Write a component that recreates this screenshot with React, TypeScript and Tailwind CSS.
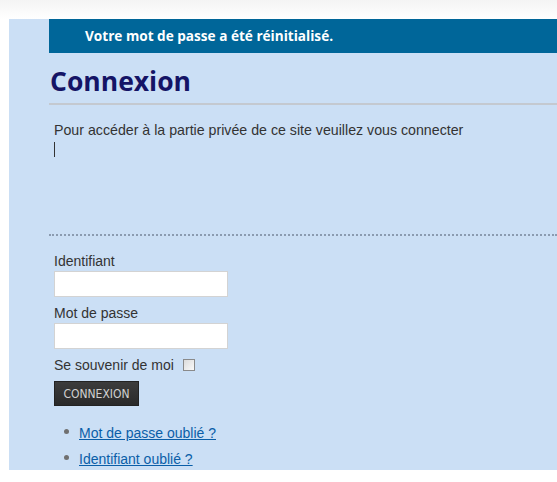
import React from "react";

export default function App() {
  return (
    <div className="w-[557px] h-[482px] bg-white overflow-hidden" style={{ fontFamily: '"Liberation Sans", Arial, sans-serif' }}>
      <div className="h-[19px] bg-gradient-to-b from-[#f4f4f4] to-white" />
      <div className="ml-[9px] h-[451px] bg-[#cbdff5] flex flex-col">
        <div className="ml-[40px] h-[34px] bg-[#006699] flex items-center pl-[36px]">
          <span className="text-white font-bold text-[13.6px]" style={{ fontFamily: '"Open Sans", sans-serif' }}>
            Votre mot de passe a été réinitialisé.
          </span>
        </div>
        <div className="ml-[40px] flex flex-col">
          <h1 className="mt-[10px] h-[36px] leading-[36px] pl-[1px] text-[26.5px] font-bold text-[#141466]" style={{ fontFamily: '"Open Sans", sans-serif' }}>
            Connexion
          </h1>
          <div className="mt-[4px] h-[2px] bg-[#c4c9d0]" />
          <p className="mt-[17px] pl-[5px] text-[14.2px] leading-[16px] text-[#333]">
            Pour accéder à la partie privée de ce site veuillez vous connecter
          </p>
          <div className="ml-[5px] mt-[4px] w-[1px] h-[15px] bg-[#333]" />
          <div className="mt-[77px] h-0 border-t-2 border-dotted border-[#8b9bb0]" />
          <div className="pl-[5px] mt-[17px] flex flex-col text-[14px] text-[#333]">
            <label className="leading-[16px]">Identifiant</label>
            <input className="mt-[2px] w-[174px] h-[26px] bg-white border border-[#d3d3d3]" />
            <label className="mt-[8px] leading-[16px]">Mot de passe</label>
            <input type="password" className="mt-[2px] w-[174px] h-[26px] bg-white border border-[#d3d3d3]" />
            <div className="mt-[8px] flex items-center leading-[16px]">
              <span>Se souvenir de moi</span>
              <span className="ml-[9px] w-[12px] h-[12px] border border-[#8a8a8a] bg-gradient-to-br from-[#dcdcdc] to-[#fafafa]" />
            </div>
            <button className="mt-[8px] w-[85px] h-[25px] bg-gradient-to-b from-[#3c3c3c] to-[#2a2a2a] border border-[#222] text-[#d0d0d0] text-[12px] flex items-center justify-center" style={{ fontFamily: '"DejaVu Sans Condensed", "DejaVu Sans", sans-serif' }}>
              CONNEXION
            </button>
            <ul className="mt-[19px] ml-[10px] flex flex-col gap-[10px]">
              <li className="flex items-center leading-[16px]">
                <span className="w-[5px] h-[5px] rounded-full bg-[#707070] mr-[10px] -mt-[4px]" />
                <a href="#" className="text-[#0a5ea8] underline">Mot de passe oublié ?</a>
              </li>
              <li className="flex items-center leading-[16px]">
                <span className="w-[5px] h-[5px] rounded-full bg-[#707070] mr-[10px] -mt-[4px]" />
                <a href="#" className="text-[#0a5ea8] underline">Identifiant oublié ?</a>
              </li>
            </ul>
          </div>
        </div>
      </div>
    </div>
  );
}
